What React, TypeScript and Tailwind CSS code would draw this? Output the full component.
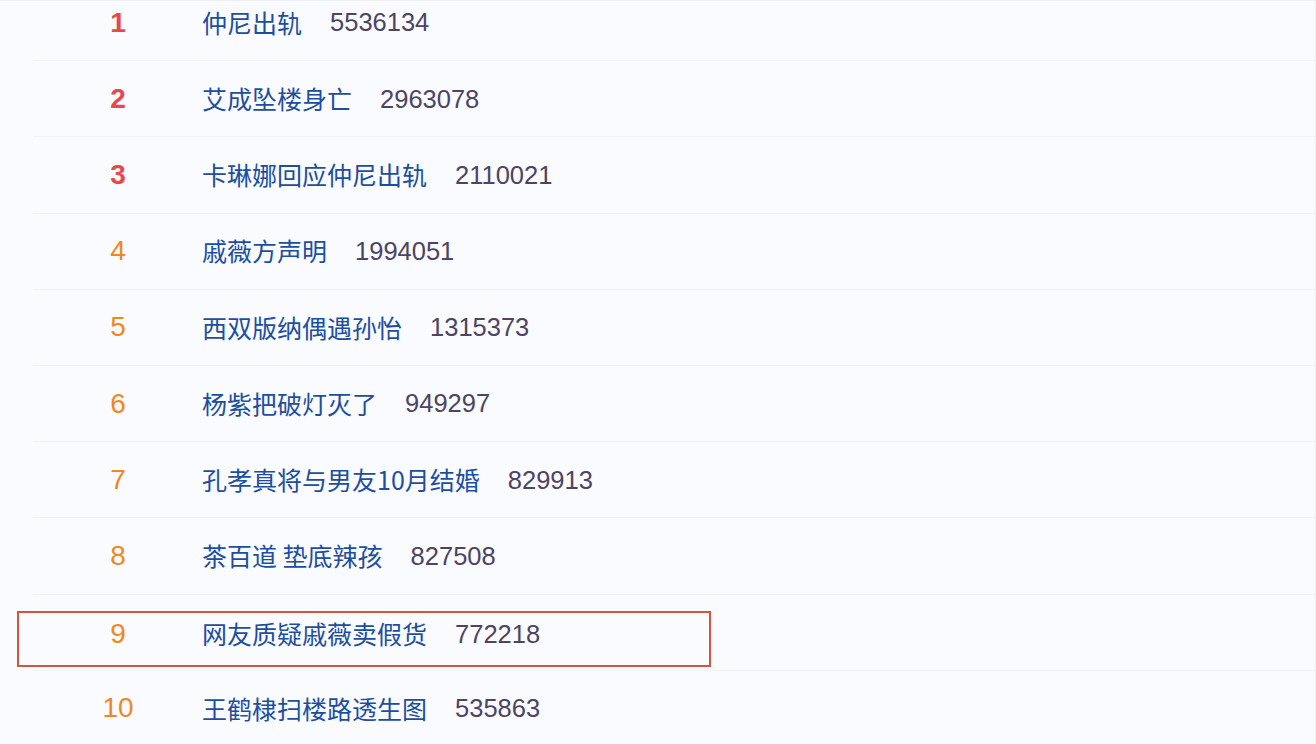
import React from "react";

const items = [
  { rank: 1, title: "仲尼出轨", num: "5536134" },
  { rank: 2, title: "艾成坠楼身亡", num: "2963078" },
  { rank: 3, title: "卡琳娜回应仲尼出轨", num: "2110021" },
  { rank: 4, title: "戚薇方声明", num: "1994051" },
  { rank: 5, title: "西双版纳偶遇孙怡", num: "1315373" },
  { rank: 6, title: "杨紫把破灯灭了", num: "949297" },
  { rank: 7, title: "孔孝真将与男友10月结婚", num: "829913" },
  { rank: 8, title: "茶百道 垫底辣孩", num: "827508" },
  { rank: 9, title: "网友质疑戚薇卖假货", num: "772218" },
  { rank: 10, title: "王鹤棣扫楼路透生图", num: "535863" },
];

function RowContent({ rank, title, num }: { rank: number; title: string; num: string }) {
  const top = rank <= 3;
  return (
    <>
      <div
        className={
          top
            ? "w-[72px] text-center text-[28px] font-bold text-[#e8484a]"
            : "w-[72px] text-center text-[28px] font-normal text-[#f0881e]"
        }
        style={{ fontFamily: '"Liberation Sans", Arial, sans-serif' }}
      >
        {rank}
      </div>
      <div className="ml-[48px] flex items-center gap-[28px]">
        <span
          className="text-[25px] text-[#1d4e9f]"
          style={{ fontFamily: '"Noto Sans CJK SC", "Liberation Sans", sans-serif' }}
        >
          {title}
        </span>
        <span
          className="text-[25.5px] text-[#4d4462]"
          style={{ fontFamily: '"Liberation Sans", Arial, sans-serif' }}
        >
          {num}
        </span>
      </div>
    </>
  );
}

export default function App() {
  return (
    <div className="w-[1316px] h-[744px] overflow-hidden bg-[#f9fbfe] border-t border-[#eceef2] border-r border-r-[#f0f2ee]">
      <div className="-mt-[16px] flex flex-col">
        {items.map((it) =>
          it.rank === 9 ? (
            <div key={it.rank} className="h-[76.2px] flex items-start border-b border-[#f1f3f7] ml-[33px]">
              <div className="mt-[16px] -ml-[16px] w-[694px] h-[56px] border-2 border-[#d4553b] flex items-center pl-[63px] pb-[9px]">
                <RowContent {...it} />
              </div>
            </div>
          ) : (
            <div
              key={it.rank}
              className="h-[76.2px] flex items-center ml-[33px] pl-[49px] border-b border-[#f1f3f7]"
            >
              <RowContent {...it} />
            </div>
          )
        )}
      </div>
    </div>
  );
}
